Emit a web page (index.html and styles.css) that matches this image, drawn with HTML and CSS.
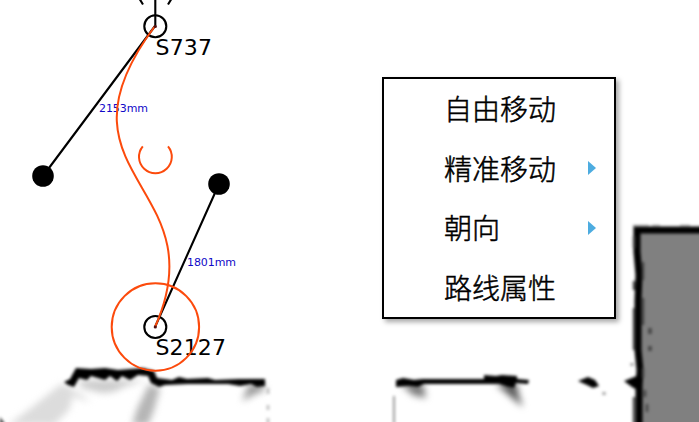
FILE: index.html
```html
<!DOCTYPE html>
<html lang="zh-CN">
<head>
<meta charset="utf-8">
<title>路线编辑</title>
<link rel="stylesheet" href="styles.css">
</head>
<body>
<main class="canvas">
  <svg class="map" width="699" height="422" viewBox="0 0 699 422">
    <defs>
      <filter id="soft" filterUnits="userSpaceOnUse" x="-20" y="200" width="740" height="250" color-interpolation-filters="sRGB"><feGaussianBlur stdDeviation="1.700"/></filter>
      <filter id="haze" filterUnits="userSpaceOnUse" x="-20" y="340" width="740" height="110" color-interpolation-filters="sRGB"><feGaussianBlur stdDeviation="3.500"/></filter>
    </defs>
    <g filter="url(#haze)">
      <path d="M61 384L75 389L69 410L54 425H8L31 408Z" fill="#dcdcdc"/>
      <path d="M149 384L160 388L154 410L148 425H132L137 409Z" fill="#b5b5b5"/>
      <path d="M78 380H145L126 386L113 392L102 393L82 388Z" fill="#ccc"/>
      <path d="M76 392L91 402L74 396Z" fill="#ccc"/>
      <path d="M249 384H264V391L257 393L242 401Z" fill="#999"/>
      <path d="M401 384H423L426 398L413 395Z" fill="#777"/>
      <path d="M496 384H517L518 393L523 407L510 396Z" fill="#555"/>
    </g>
    <g filter="url(#soft)">
      <path class="gray" d="M638 231H705V428H638Z"/>
      <path class="wall" d="M64 382L70 379L76 368L91 369L105 368L118 370L143 368L154 371L157 378L172 380L179 377L187 379L208 378L215 380L239 379L265 379V386L257 387L251 384L240 386L228 384L213 384L188 384L165 385L159 387L151 383L148 376L138 375L130 380L122 376L117 381L110 376L105 380L91 376L87 380L79 378L74 387L68 385Z"/>
      <path class="wall" d="M396 380L403 378L414 380L423 379L430 379H484L484 375L496 376L502 375L517 376V379L529 380L528 384L516 383L514 388L508 387L499 384L430 384L424 384L418 387L408 386L396 387Z"/>
      <path class="wall" d="M578 381L588 377L595 380L599 386L593 388L587 385Z"/>
      <path d="M639 425V385L640 370L638 350L638 300L639 275L637 252V230H705" fill="none" stroke="#000" stroke-width="7"/>
      <path class="wall" d="M624 381L639 375V391L632 387Z"/>
      <path d="M633 226H649M652 226H660M680 226H690" stroke="#888" stroke-width="2"/>
      <path d="M634 236V248M634 281V290M634 308V350M643 262V280M643 298V325M643 368V378M645 390V397M647 404V412M634 397V424" stroke="#444" stroke-width="2.500"/>
      <path d="M650 328V334M650 346V351" stroke="#444" stroke-width="3.500"/>
      <path d="M394 396V424" stroke="#999" stroke-width="2"/>
      <path d="M268 388V394M268 405V410M268 418V424" stroke="#bbb" stroke-width="2.500"/>
      <path d="M604 392V395M632 363V366" stroke="#999" stroke-width="3"/>
      <path d="M0 417L5 424H0Z" fill="#333"/>
    </g>
    <g class="black-line">
      <path d="M155 26L43 176M155 327L219 184M155.300 0V26"/>
      <path d="M139 -2L143 4.500M172 -2L168 4.500"/>
      <circle cx="155.300" cy="26.300" r="11"/>
      <circle cx="155.300" cy="327" r="11"/>
    </g>
    <circle cx="43" cy="176" r="10.800"/>
    <circle cx="219" cy="184" r="10.800"/>
    <g class="node-name">
      <text x="155.500" y="55" textLength="56.500">S737</text>
      <text x="155.500" y="355" textLength="70.500">S2127</text>
    </g>
    <g class="distance">
      <text x="99" y="112" textLength="49">2153mm</text>
      <text x="187" y="266" textLength="49">1801mm</text>
    </g>
    <g class="route">
      <path d="M155 26C43 176 219 184 155 327"/>
      <circle cx="155.400" cy="327" r="43.700"/>
      <path d="M142.800 146.300A16.400 16.400 0 1 0 168 146.300"/>
    </g>
    <g class="node-dot">
      <circle cx="155.300" cy="26.500" r="1.600"/>
      <circle cx="155.300" cy="327" r="1.600"/>
    </g>
  </svg>
  <ul class="menu">
    <li class="item">自由移动</li>
    <li class="item submenu">精准移动</li>
    <li class="item submenu">朝向</li>
    <li class="item">路线属性</li>
  </ul>
</main>
</body>
</html>
```
FILE: styles.css
```css
body {
  margin: 0;
  background: #fff;
  overflow: hidden;
}

.canvas {
  position: relative;
  width: 699px;
  height: 422px;
  overflow: hidden;
}

.map {
  display: block;
}

.wall {
  fill: #000;
}

.gray {
  fill: #808080;
}

.black-line {
  fill: none;
  stroke: #000;
  stroke-width: 2.1;
}

.route {
  fill: none;
  stroke: #fc4a0c;
  stroke-width: 2;
}

.node-dot {
  fill: #501010;
}

.node-name {
  font: 22px "DejaVu Sans", sans-serif;
  fill: #000;
}

.distance {
  font: 11px "DejaVu Sans", sans-serif;
  fill: #1008c8;
}

.menu {
  position: absolute;
  left: 382px;
  top: 77px;
  box-sizing: border-box;
  width: 234px;
  height: 242px;
  margin: 0;
  padding: 0;
  list-style: none;
  background: #fff;
  border: 2px solid #000;
  box-shadow: 3px 3px 5px rgba(0, 0, 0, 0.35);
}

.item {
  display: flex;
  align-items: center;
  justify-content: space-between;
  height: 59.6px;
  padding: 0 18px 0 60px;
  font: 300 28px/41px "Noto Sans CJK SC", sans-serif;
  color: #000;
  -webkit-text-stroke: 0.5px #000;
}

.submenu::after {
  content: "";
  border-left: 8px solid #4dace0;
  border-top: 7px solid transparent;
  border-bottom: 7px solid transparent;
}
```
